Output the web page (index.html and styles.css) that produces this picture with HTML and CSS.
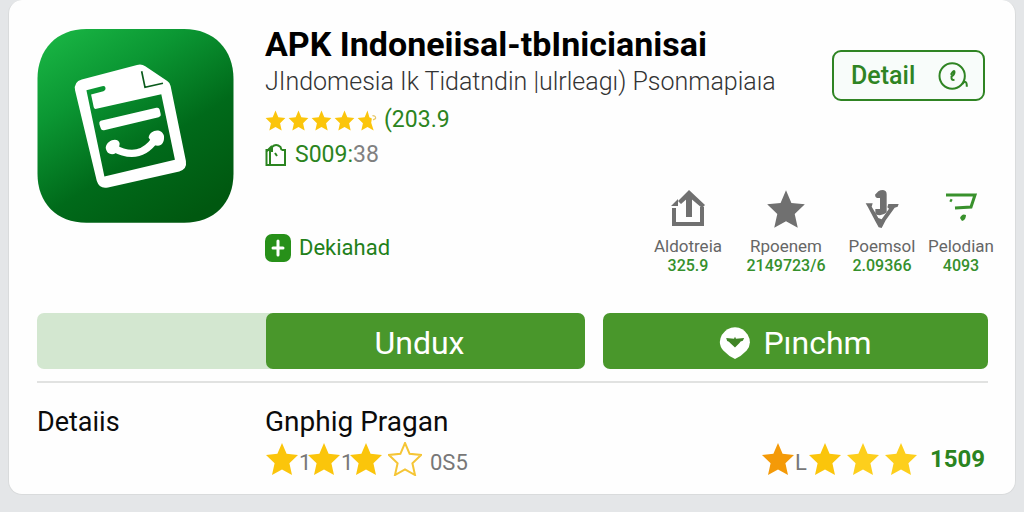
FILE: index.html
```html
<!DOCTYPE html>
<html lang="id">
<head>
    <meta charset="UTF-8">
    <meta name="viewport" content="width=device-width, initial-scale=1.0">
    <title>APK Indonesia</title>
    <link rel="stylesheet" href="styles.css">
</head>
<body>
    <!-- Shared star shape -->
    <svg class="sprite" aria-hidden="true">
        <symbol id="star" viewBox="0 0 34 34">
            <path d="M17 1l4.6 10.8L33 13l-8.600 8.300L27 33l-10-5.600L7 33l2.600-11.700L1 13l11.400-1.200z"/>
        </symbol>
    </svg>

    <main class="card">
        <header class="app">
            <svg class="logo" viewBox="112 87 591 583" role="img" aria-label="Logo">
                <defs>
                    <linearGradient id="logoFill" x1="0.1" y1="0" x2="0.75" y2="1">
                        <stop offset="0" stop-color="#19b544"/>
                        <stop offset="0.3" stop-color="#0b9733"/>
                        <stop offset="0.65" stop-color="#006a1a"/>
                        <stop offset="1" stop-color="#005810"/>
                    </linearGradient>
                </defs>
                <path fill="url(#logoFill)" d="M260 87h294c90 0 148 62 148 150v285c0 88-58 147-148 147H260c-90 0-147-59-147-147V237c0-88 57-150 147-150z"/>
                <path fill="#fff" fill-rule="evenodd" d="M246 239L412 195q14-4 25 4l66 44q8 5 10 15l46 226q4 25-20 31l-214 48q-26 6-34-20L226 272q-5-26 20-33zM260 271l54 259 212-50-41-197-195 44q-6 2-8-5l-8-38 37-10q8-3 6-11-2-6-10-4z"/>
                <path fill="none" stroke="#0a5a1c" stroke-width="5" d="M426 214l10 48 54-12"/>
                <path fill="#fff" d="M303 363l167-39q8-2 10 5l3 13q2 8-6 10l-164 39q-8 2-10-6l-4-12q-2-8 4-10z"/>
                <path fill="none" stroke="#fff" stroke-width="22" d="M340 444c55 30 95 20 128-27"/>
                <path fill="#fff" d="M318 444c2-25 40-34 42-12l-3 17c-8 20-36 20-39-5zM447 414c2-24 39-32 46-6 3 25-13 36-31 26z"/>
            </svg>

            <div class="info">
                <div class="top">
                    <div class="heading">
                        <h1>APK Indoneiisal-tbInicianisai</h1>
                        <p class="subtitle">JIndomesia Ik Tidatndin |ulrleagı) Psonmapiaıa</p>
                        <div class="rating">
                            <svg class="star small"><use href="#star"/></svg>
                            <svg class="star small"><use href="#star"/></svg>
                            <svg class="star small"><use href="#star"/></svg>
                            <svg class="star small"><use href="#star"/></svg>
                            <svg class="star small" viewBox="0 0 34 34"><path d="M17 1l3 10.800 4 2-1 7L27 33l-10-5.600L7 33l2.600-11.700L1 13l11.400-1.200z"/><path class="spark" d="M25 9q6 0 5 5l-4 2"/></svg>
                            <span>(203.9</span>
                        </div>
                        <div class="size">
                            <svg class="bag" viewBox="0 0 22 24"><path d="M7 7H1.500v15H20V7h-3.500M7 9V4q4-4 8.500 0l1 3M5 8v14M1 9l6-6M10 10l2 3"/></svg>
                            <span>S009:<em>38</em></span>
                        </div>
                    </div>
                    <button class="detail" type="button">
                        Detail
                        <svg viewBox="354 94 92 84"><circle cx="396" cy="136" r="38"/><path d="M426 160q14-16 14 8M392 132q10-16 11-8 0 8-9 13-1 14 9 10"/></svg>
                    </button>
                </div>

                <div class="bottom">
                    <a class="added" href="#">
                        <svg viewBox="0 0 26 28"><rect width="26" height="28" rx="7"/><path d="M13 7v14M8 14h10"/></svg>
                        Dekiahad
                    </a>
                    <ul class="stats">
                        <li>
                            <svg viewBox="0 0 40 40"><path class="line" d="M6 19v16h28V18"/><path class="line wide" d="M21 28V8"/><path d="M21 1l16 15-3 3-13-11-8 7-3-3zM3 17l7-7v7z"/></svg>
                            <span>Aldotreia</span>
                            <b>325.9</b>
                        </li>
                        <li>
                            <svg viewBox="0 0 36 36"><use href="#star"/></svg>
                            <span>Rpoenem</span>
                            <b>2149723/6</b>
                        </li>
                        <li>
                            <svg viewBox="94 31 120 120"><path d="M133 48l10-10q6-4 14-4 11 1 11 13v54q-14 14-34 6v-16h14V58h-9q-6-3-6-10z"/><path d="M105 74h21l-3 10 11 18 9 16 10 4 22-32-5-4 3-10h31l-3 8-9 3-27 38-12 23-9-2-10-18-22-42z"/></svg>
                            <span>Poemsol</span>
                            <b>2.09366</b>
                        </li>
                        <li>
                            <svg class="cart" viewBox="0 0 40 40"><path class="line" d="M5 6h29l-4 12-16 1M9 11l2 1"/><path d="M19 29q2-5 6-3 0 5-4 6z"/></svg>
                            <span>Pelodian</span>
                            <b>4093</b>
                        </li>
                    </ul>
                </div>
            </div>
        </header>

        <div class="actions">
            <div class="progress">
                <button type="button">Undux</button>
            </div>
            <button type="button">
                <svg viewBox="131 76 98 98"><path fill="#fff" d="M180 77q25 0 39 23 15 27-4 49-17 18-35 25-18-7-35-25-20-22-5-49 15-23 40-23z"/><path fill="#3f8426" d="M153 110l24 2 3-6 3 6 25-2-4 8q-8 1-11 8l-13 13-14-13q-4-6-10-7z"/></svg>
                Pınchm
            </button>
        </div>

        <section class="details">
            <h2>Detaiis</h2>
            <div class="review">
                <h2>Gnphig Pragan</h2>
                <div class="scores">
                    <div class="score">
                        <svg class="star"><use href="#star"/></svg>
                        <i>1</i>
                        <svg class="star"><use href="#star"/></svg>
                        <i>1</i>
                        <svg class="star"><use href="#star"/></svg>
                        <svg class="star empty"><use href="#star"/></svg>
                        <span>0S5</span>
                    </div>
                    <div class="score total">
                        <svg class="star orange"><use href="#star"/></svg>
                        <i>L</i>
                        <svg class="star"><use href="#star"/></svg>
                        <svg class="star light"><use href="#star"/></svg>
                        <svg class="star light"><use href="#star"/></svg>
                        <b>1509</b>
                    </div>
                </div>
            </div>
        </section>
    </main>
</body>
</html>
```
FILE: styles.css
```css
* {
    box-sizing: border-box;
}

body {
    margin: 0;
    padding: 0 8px 16px;
    background: #e4e6e8;
    font-family: Roboto, "Liberation Sans", sans-serif;
    color: #0b0b0b;
}

h1, h2, p, ul {
    margin: 0;
    padding: 0;
}

button {
    font-family: inherit;
    cursor: pointer;
}

.sprite {
    position: absolute;
    width: 0;
    height: 0;
}

.card {
    padding: 29px 27px 18px 28px;
    background: #fefefe;
    border: 1px solid #d9dbdc;
    border-top: none;
    border-radius: 14px;
}

/* App header */
.app {
    display: flex;
    gap: 31px;
}

.logo {
    flex: none;
    width: 197px;
    height: 194px;
}

.info {
    flex: 1;
}

.top {
    display: flex;
    justify-content: space-between;
    align-items: flex-start;
}

.heading {
    display: flex;
    flex-direction: column;
    gap: 8px;
    white-space: nowrap;
}

h1 {
    font-size: 34px;
    font-weight: 700;
    line-height: 30px;
    color: #000;
}

.subtitle {
    font-size: 25px;
    font-weight: 300;
    line-height: 30px;
    color: #333;
}

.rating, .size {
    display: flex;
    align-items: center;
    font-size: 23px;
    color: #2b8420;
}

.rating {
    gap: 2px;
    line-height: 30px;
}

.rating span {
    margin-left: 4px;
}

.size {
    gap: 8px;
    line-height: 24px;
}

.size em {
    font-style: normal;
    color: #808080;
}

.bag {
    width: 22px;
    height: 24px;
    fill: none;
    stroke: #2b8420;
    stroke-width: 2;
}

.star {
    flex: none;
    width: 34px;
    height: 34px;
    fill: #fbc50b;
}

.star.small {
    width: 21px;
    height: 21px;
}

.star.orange {
    fill: #f49a08;
}

.star.light {
    fill: #fdcf1c;
}

.star.empty {
    fill: none;
    stroke: #f5c535;
    stroke-width: 2;
}

.spark {
    fill: none;
    stroke: #e6c76a;
    stroke-width: 2;
}

.detail {
    display: flex;
    align-items: center;
    justify-content: space-between;
    width: 153px;
    height: 51px;
    margin: 21px 3px 0 0;
    padding: 0 14px 0 17px;
    background: #f8fcfa;
    border: 2px solid #2f8423;
    border-radius: 9px;
    font-size: 25px;
    font-weight: 500;
    color: #2f8423;
}

.detail svg {
    width: 31px;
    height: 28px;
    fill: none;
    stroke: #2f8423;
    stroke-width: 6;
}

.bottom {
    display: flex;
    justify-content: space-between;
    align-items: flex-start;
    margin-top: 22px;
}

.added {
    display: flex;
    align-items: center;
    gap: 8px;
    margin-top: 45px;
    font-size: 22px;
    line-height: 28px;
    color: #22801a;
    text-decoration: none;
}

.added svg {
    width: 26px;
    height: 28px;
    fill: #279019;
}

.added path {
    stroke: #fff;
    stroke-width: 3;
    stroke-linecap: round;
}

/* Statistics */
.stats {
    display: grid;
    grid-template-columns: 80px 100px 76px 66px;
    gap: 8px;
    margin-right: -6px;
    list-style: none;
}

.stats li {
    display: flex;
    flex-direction: column;
    align-items: center;
    font-size: 17px;
    line-height: 20px;
    color: #666;
}

.stats svg {
    width: 40px;
    height: 40px;
    margin-bottom: 7px;
    fill: #707070;
}

.stats .line {
    fill: none;
    stroke: #707070;
    stroke-width: 4;
}

.stats .wide {
    stroke-width: 6;
}

.stats .cart {
    fill: #39912c;
}

.stats .cart .line {
    stroke: #39912c;
    stroke-width: 3;
}

.stats b {
    font-size: 16px;
    font-weight: 500;
    color: #35902c;
}

/* Buttons */
.actions {
    display: grid;
    grid-template-columns: 548fr 385fr;
    gap: 18px;
    margin-top: 37px;
    padding-bottom: 12px;
    border-bottom: 2px solid #e1e2e1;
}

.actions button {
    display: flex;
    align-items: center;
    justify-content: center;
    gap: 12px;
    height: 56px;
    padding: 4px 12px 0 0;
    background: #49972b;
    border: none;
    border-radius: 7px;
    font-size: 32px;
    color: #fff;
}

.actions > button {
    padding: 4px 0 0;
}

.actions svg {
    width: 32px;
    height: 32px;
}

.progress {
    background: #d3e7d0;
    border-radius: 7px;
}

.progress button {
    width: calc(100% - 229px);
    margin-left: auto;
}

/* Details */
.details {
    display: flex;
    margin-top: 22px;
}

.details > h2 {
    width: 228px;
}

h2 {
    font-size: 27px;
    font-weight: 400;
    line-height: 34px;
}

.review {
    flex: 1;
}

.review h2 {
    font-size: 28px;
}

.scores {
    display: flex;
    justify-content: space-between;
    margin-top: 3px;
}

.score {
    display: flex;
    align-items: center;
    gap: 5px;
    font-size: 22px;
    line-height: 34px;
    color: #777;
}

.score i {
    width: 8px;
    margin: 8px -5px 0;
    font-size: 22px;
    line-height: 26px;
    font-style: normal;
}

.score span {
    margin: 8px 0 0 3px;
    line-height: 26px;
}

.total {
    gap: 4px;
}

.total i {
    width: 13px;
    margin: 8px -4px 0;
}

.score b {
    margin: 0 3px 0 8px;
    font-size: 24px;
    font-weight: 700;
    color: #2b8420;
}
```
